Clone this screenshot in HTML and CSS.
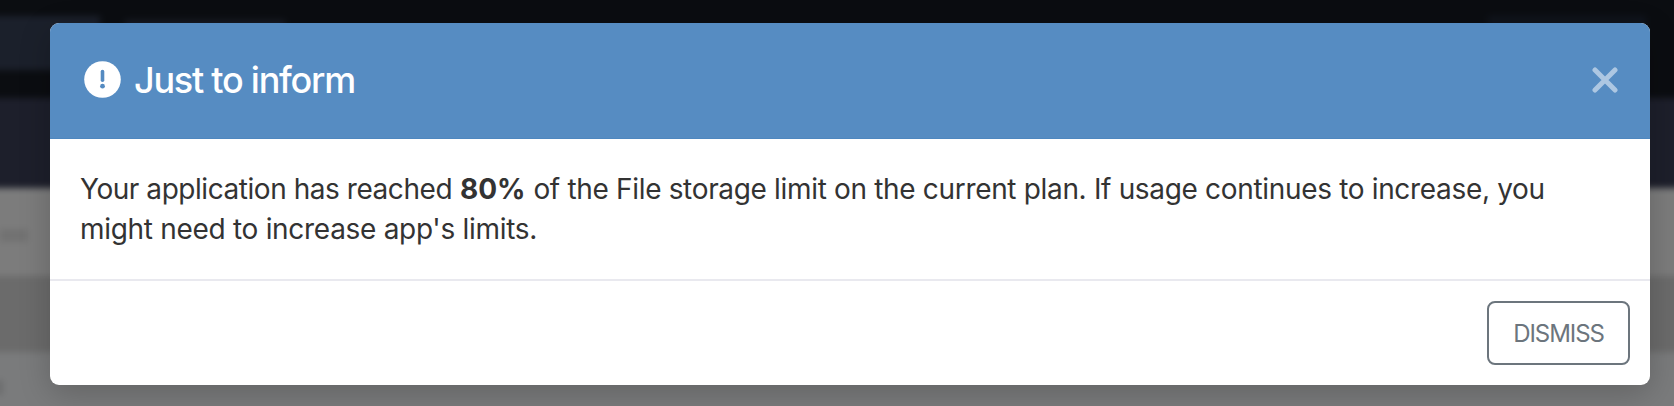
FILE: index.html
```html
<!DOCTYPE html>
<html lang="en">
<head>
<meta charset="utf-8">
<title>Just to inform</title>
<link rel="stylesheet" href="styles.css">
</head>
<body>
<div class="backdrop" aria-hidden="true">
  <div class="topbar"><div class="tab"></div><div class="crumb"></div><div class="search"></div></div>
  <div class="nav"></div>
  <div class="row-light"><span class="smudge"></span></div>
  <div class="row-dark"></div>
  <div class="row-last"><span class="dot"></span></div>
</div>
<section class="modal" role="dialog" aria-labelledby="title">
  <header class="modal-header">
    <svg class="info-icon" viewBox="0 0 37 37"><circle cx="18.5" cy="18.5" r="18.3" fill="#fff"/><path d="M18.5 10.6v8.6" stroke="#558bc1" stroke-width="3.6" stroke-linecap="round"/><circle cx="18.5" cy="25.2" r="2.4" fill="#558bc1"/></svg>
    <h1 class="modal-title" id="title">Just to inform</h1>
    <button class="close" aria-label="Close"><svg viewBox="0 0 26 26"><path d="M3 3l20 20M23 3L3 23" stroke="#adc7e2" stroke-width="5" stroke-linecap="round"/></svg></button>
  </header>
  <div class="modal-body">
    <p class="message"><span class="lead">Your application has reached</span> <strong>80%</strong> <span class="rest">of the File storage limit on the current plan. If usage continues to increase, you</span><br><span class="tail">might need to increase app's limits.</span></p>
  </div>
  <footer class="modal-footer"><button class="dismiss">DISMISS</button></footer>
</section>
</body>
</html>
```
FILE: styles.css
```css
* { box-sizing: border-box; }
body {
  margin: 0;
  height: 406px;
  padding: 23px 24px 21px 50px;
  overflow: hidden;
  background: #0b0d11;
  font-family: Inter, "Liberation Sans", sans-serif;
}
.backdrop {
  position: absolute;
  inset: 0;
  overflow: hidden;
  filter: blur(3px);
  background: #797a7b;
  width: 1714px;
  height: 446px;
  margin: -20px;
}
.topbar {
  display: flex;
  height: 118px;
  padding-top: 36px;
  background: #0b0d11;
}
.topbar > div { flex: none; }
.tab { width: 120px; height: 54px; background: #1b202b; }
.crumb { width: 160px; height: 40px; margin: 4px 0 0 25px; background: #181b25; }
.search { width: 158px; height: 40px; margin: 0 0 0 1203px; background: #10141c; }
.nav { height: 90px; background: #1d1f2b; }
.row-light { height: 88px; background: #7c7c7c; padding: 41px 0 0 20px; }
.row-dark { height: 76px; background: #6b6b6b; }
.row-last { height: 74px; background: #7a7b7c; padding: 28px 0 0 18px; }
.smudge { display: block; width: 28px; height: 13px; background: #727272; }
.dot { display: block; width: 4px; height: 15px; background: #656667; }
.modal {
  position: relative;
  width: 1600px;
  height: 362px;
  border-radius: 9px;
  overflow: hidden;
  background: #fff;
  box-shadow: 0 8px 32px rgba(0, 0, 0, .2);
}
.modal-header {
  display: flex;
  align-items: center;
  height: 116px;
  padding: 0 32px 2px 34px;
  background: #568cc2;
  border-bottom: 1px solid #4e87bf;
}
.info-icon { width: 37px; height: 37px; }
.modal-title {
  margin: 0 0 0 13px;
  color: #fff;
  font-size: 36px;
  font-weight: 500;
  line-height: 44px;
  letter-spacing: -1.25px;
}
.close { width: 26px; height: 26px; margin-left: auto; padding: 0; border: 0; background: none; }
.close svg { display: block; }
.modal-body { height: 140px; padding: 30px; }
.message { margin: 0; color: #333; font-size: 28px; font-weight: 400; line-height: 40px; white-space: nowrap; }
.message strong { font-weight: 700; }
.lead { letter-spacing: -.45px; }
.rest { letter-spacing: -.33px; }
.tail { letter-spacing: -.3px; }
.modal-footer {
  display: flex;
  justify-content: flex-end;
  height: 106px;
  padding: 20px;
  border-top: 2px solid #e9e9ef;
}
.dismiss {
  width: 143px;
  height: 64px;
  padding: 0;
  border: 2px solid #6c757d;
  border-radius: 8px;
  background: #fff;
  color: #6c757d;
  font: 400 24px Inter, "Liberation Sans", sans-serif;
  letter-spacing: -1.05px;
}
```
